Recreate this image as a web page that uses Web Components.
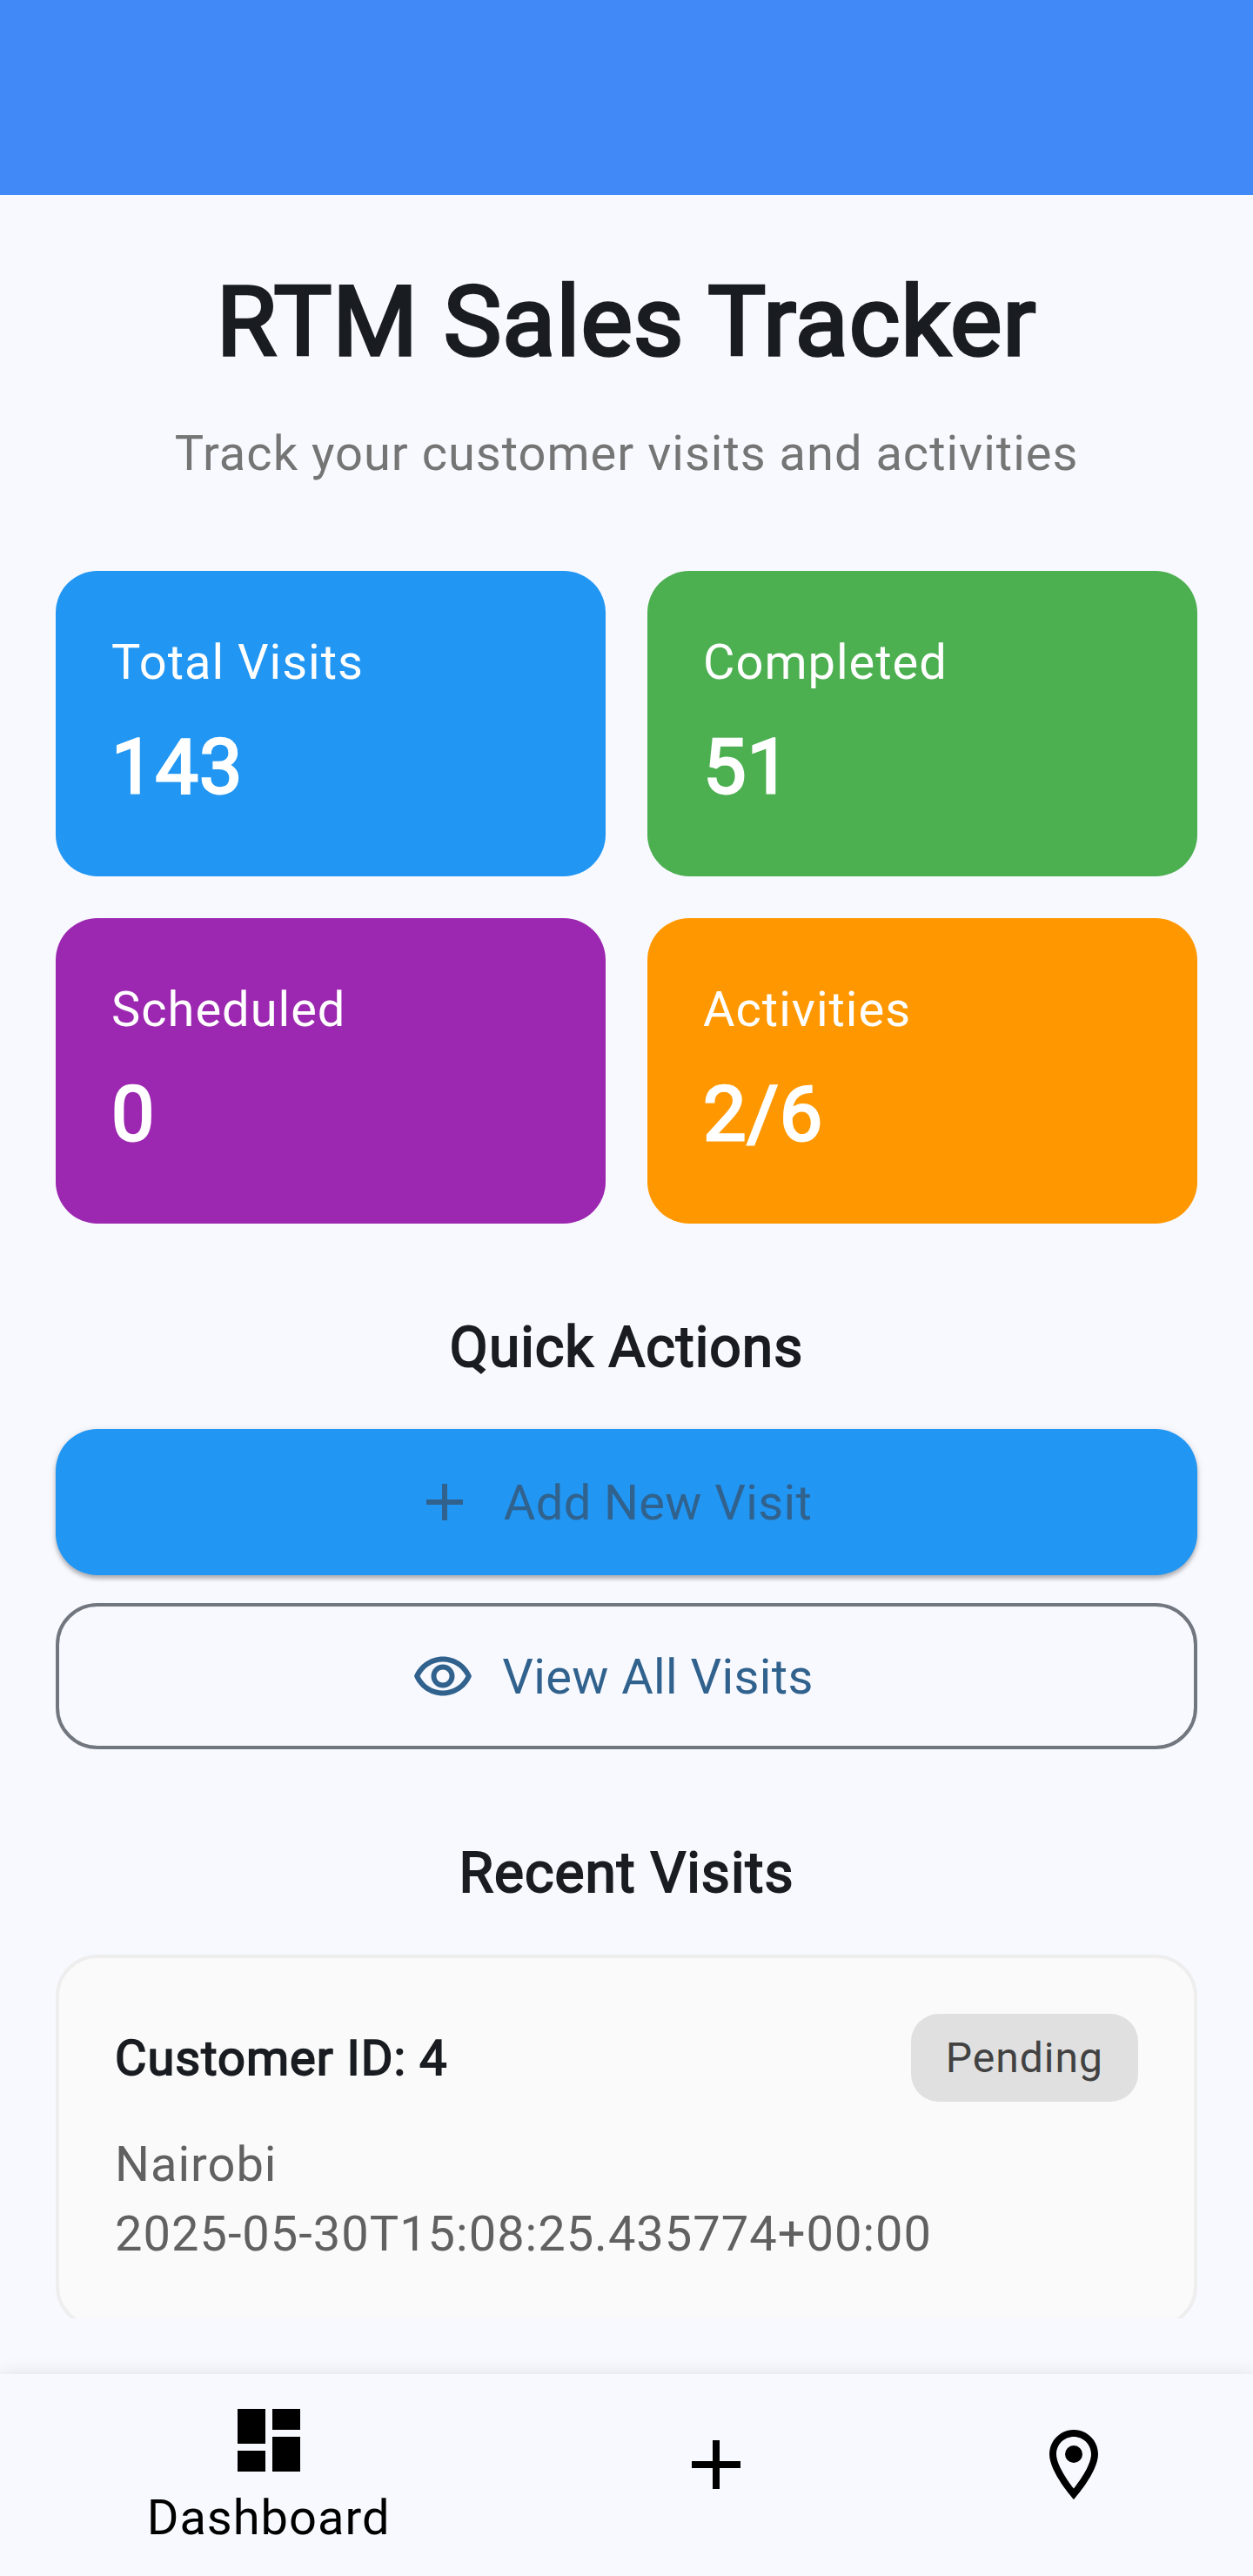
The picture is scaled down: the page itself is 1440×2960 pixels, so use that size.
<!DOCTYPE html>
<html lang="en">
<head>
<meta charset="utf-8">
<title>RTM Sales Tracker</title>
<style>
  html, body { margin: 0; padding: 0; }
  body { font-family: Roboto, "Liberation Sans", sans-serif; background: #f8f9ff; }
</style>
</head>
<body>
<rtm-app>
  <rtm-heading>
    RTM Sales Tracker
    <span slot="subtitle">Track your customer visits and activities</span>
  </rtm-heading>
  <rtm-stats>
    <rtm-stat label="Total Visits" style="--tile:#2196f3">143</rtm-stat>
    <rtm-stat label="Completed" style="--tile:#4caf50">51</rtm-stat>
    <rtm-stat label="Scheduled" style="--tile:#9c27b0">0</rtm-stat>
    <rtm-stat label="Activities" style="--tile:#ff9800">2/6</rtm-stat>
  </rtm-stats>
  <rtm-section heading="Quick Actions">
    <rtm-button variant="filled" icon="add">Add New Visit</rtm-button>
    <rtm-button variant="outlined" icon="eye">View All Visits</rtm-button>
  </rtm-section>
  <rtm-section heading="Recent Visits">
    <rtm-visit>
      Customer ID: 4
      <rtm-chip slot="status">Pending</rtm-chip>
      <span slot="place">Nairobi</span>
      <span slot="time">2025-05-30T15:08:25.435774+00:00</span>
    </rtm-visit>
  </rtm-section>
  <rtm-nav slot="nav">
    <rtm-nav-item icon="dashboard" style="--grow:3">Dashboard</rtm-nav-item>
    <rtm-nav-item icon="add" style="--grow:2"></rtm-nav-item>
    <rtm-nav-item icon="place" style="--grow:2"></rtm-nav-item>
  </rtm-nav>
</rtm-app>

<script>
const ICONS = {
  add: '<path d="M19 13h-6v6h-2v-6H5v-2h6V5h2v6h6v2z"/>',
  eye: '<path d="M12 6.5c3.79 0 7.17 2.13 8.82 5.5-1.65 3.37-5.02 5.5-8.82 5.5S4.83 15.37 3.18 12C4.83 8.63 8.21 6.5 12 6.5m0-2C7 4.5 2.73 7.61 1 12c1.73 4.39 6 7.5 11 7.5s9.27-3.11 11-7.5c-1.73-4.39-6-7.5-11-7.5zm0 5c1.38 0 2.5 1.12 2.5 2.5s-1.12 2.5-2.5 2.5-2.5-1.12-2.5-2.5 1.12-2.5 2.5-2.5m0-2c-2.48 0-4.5 2.02-4.5 4.5s2.02 4.5 4.5 4.5 4.5-2.02 4.5-4.5-2.02-4.5-4.5-4.5z"/>',
  dashboard: '<path d="M3 13h8V3H3v10zm0 8h8v-6H3v6zm10 0h8V11h-8v10zm0-18v6h8V3h-8z"/>',
  place: '<path d="M12 2C8.13 2 5 5.13 5 9c0 5.25 7 13 7 13s7-7.75 7-13c0-3.87-3.13-7-7-7zM7 9c0-2.76 2.24-5 5-5s5 2.24 5 5c0 2.88-2.88 7.19-5 9.88C9.92 16.21 7 11.85 7 9z"/><circle cx="12" cy="9" r="2.5"/>'
};

function define(name, render) {
  customElements.define(name, class extends HTMLElement {
    constructor() {
      super();
      this.attachShadow({ mode: 'open' });
    }
    connectedCallback() {
      this.shadowRoot.innerHTML = render(this);
    }
  });
}

define('rtm-icon', el => `
  <style>
    :host { display: block; flex: none; width: var(--size, 96px); height: var(--size, 96px); }
    svg { display: block; width: 100%; height: 100%; fill: currentColor; }
  </style>
  <svg viewBox="0 0 24 24">${ICONS[el.getAttribute('name')]}</svg>`);

define('rtm-app', () => `
  <style>
    :host { display: flex; flex-direction: column; width: 1440px; height: 2960px; overflow: hidden;
      background: #f8f9ff; color: #191c20; font-size: 56px; line-height: 80px; letter-spacing: 1px; }
    header { flex: none; height: 224px; background: #4289f8; }
    main { flex: none; height: 2376px; padding: 64px 64px 0; overflow: hidden; display: flex; flex-direction: column; }
    footer { margin-top: auto; }
  </style>
  <header></header>
  <main><slot></slot></main>
  <footer><slot name="nav"></slot></footer>`);

define('rtm-heading', () => `
  <style>
    :host { display: flex; flex-direction: column; flex: none; gap: 31px; text-align: center;
      box-sizing: border-box; height: 368px; padding-top: 2px; }
    h1 { margin: 0; font-size: 112px; line-height: 160px; font-weight: 400; -webkit-text-stroke: 3.5px currentColor; }
    p { margin: 0; color: #757575; }
  </style>
  <h1><slot></slot></h1>
  <p><slot name="subtitle"></slot></p>`);

define('rtm-stats', () => `
  <style>
    :host { display: grid; flex: none; grid-template-columns: 1fr 1fr; grid-auto-rows: 351px; gap: 48px; }
  </style>
  <slot></slot>`);

define('rtm-stat', el => `
  <style>
    :host { display: flex; flex-direction: column; gap: 17px; box-sizing: border-box; padding: 65px 64px 0;
      border-radius: 48px; background: var(--tile); color: #fff; }
    .value { font-size: 88px; line-height: 126px; -webkit-text-stroke: 2.75px currentColor; }
  </style>
  <div>${el.getAttribute('label')}</div>
  <div class="value"><slot></slot></div>`);

define('rtm-section', el => `
  <style>
    :host { display: flex; flex-direction: column; flex: none; padding-top: 97px; }
    h2 { margin: 0 0 47px; font-size: 64px; line-height: 92px; font-weight: 400; text-align: center;
      -webkit-text-stroke: 2px currentColor; }
    .body { display: flex; flex-direction: column; gap: 32px; }
  </style>
  <h2>${el.getAttribute('heading')}</h2>
  <div class="body"><slot></slot></div>`);

define('rtm-button', el => `
  <style>
    :host { display: flex; align-items: center; justify-content: center; gap: 32px; box-sizing: border-box;
      height: 168px; padding-right: 32px; border-radius: 48px; color: #31628d; letter-spacing: .4px; --size: 72px; }
    :host([variant="filled"]) { background: #2196f3;
      box-shadow: 0 4px 4px rgba(0,0,0,.22), 0 2px 8px rgba(0,0,0,.14); }
    :host([variant="outlined"]) { border: 4px solid #72777f; }
    span { padding-top: 2px; }
  </style>
  <rtm-icon name="${el.getAttribute('icon')}"></rtm-icon>
  <span><slot></slot></span>`);

define('rtm-chip', () => `
  <style>
    :host { display: block; padding: 17px 40px 15px; border-radius: 32px; background: #e0e0e0; color: #424242;
      font-size: 48px; line-height: 68.6px; }
  </style>
  <slot></slot>`);

define('rtm-visit', () => `
  <style>
    :host { display: flex; flex-direction: column; gap: 32px; padding: 64px; border: 4px solid #eee;
      border-radius: 48px; background: #fafafa; }
    .top { display: flex; align-items: center; justify-content: space-between; }
    .name { padding-top: 2px; -webkit-text-stroke: 1.75px currentColor; }
    .info { display: flex; flex-direction: column; color: #616161; }
  </style>
  <div class="top"><div class="name"><slot></slot></div><slot name="status"></slot></div>
  <div class="info"><slot name="place"></slot><slot name="time"></slot></div>`);

define('rtm-nav', () => `
  <style>
    :host { display: flex; height: 232px; background: #f8f9ff; color: #000; box-shadow: 0 0 20px rgba(0,0,0,.1); }
  </style>
  <slot></slot>`);

define('rtm-nav-item', el => `
  <style>
    :host { display: flex; flex: var(--grow) 1 0; min-width: 0; flex-direction: column; align-items: center;
      box-sizing: border-box; padding-top: 28px; }
    :host(:empty) { padding-top: 56px; }
    .label { padding-top: 1px; }
  </style>
  <rtm-icon name="${el.getAttribute('icon')}"></rtm-icon>
  <div class="label"><slot></slot></div>`);
</script>
</body>
</html>
